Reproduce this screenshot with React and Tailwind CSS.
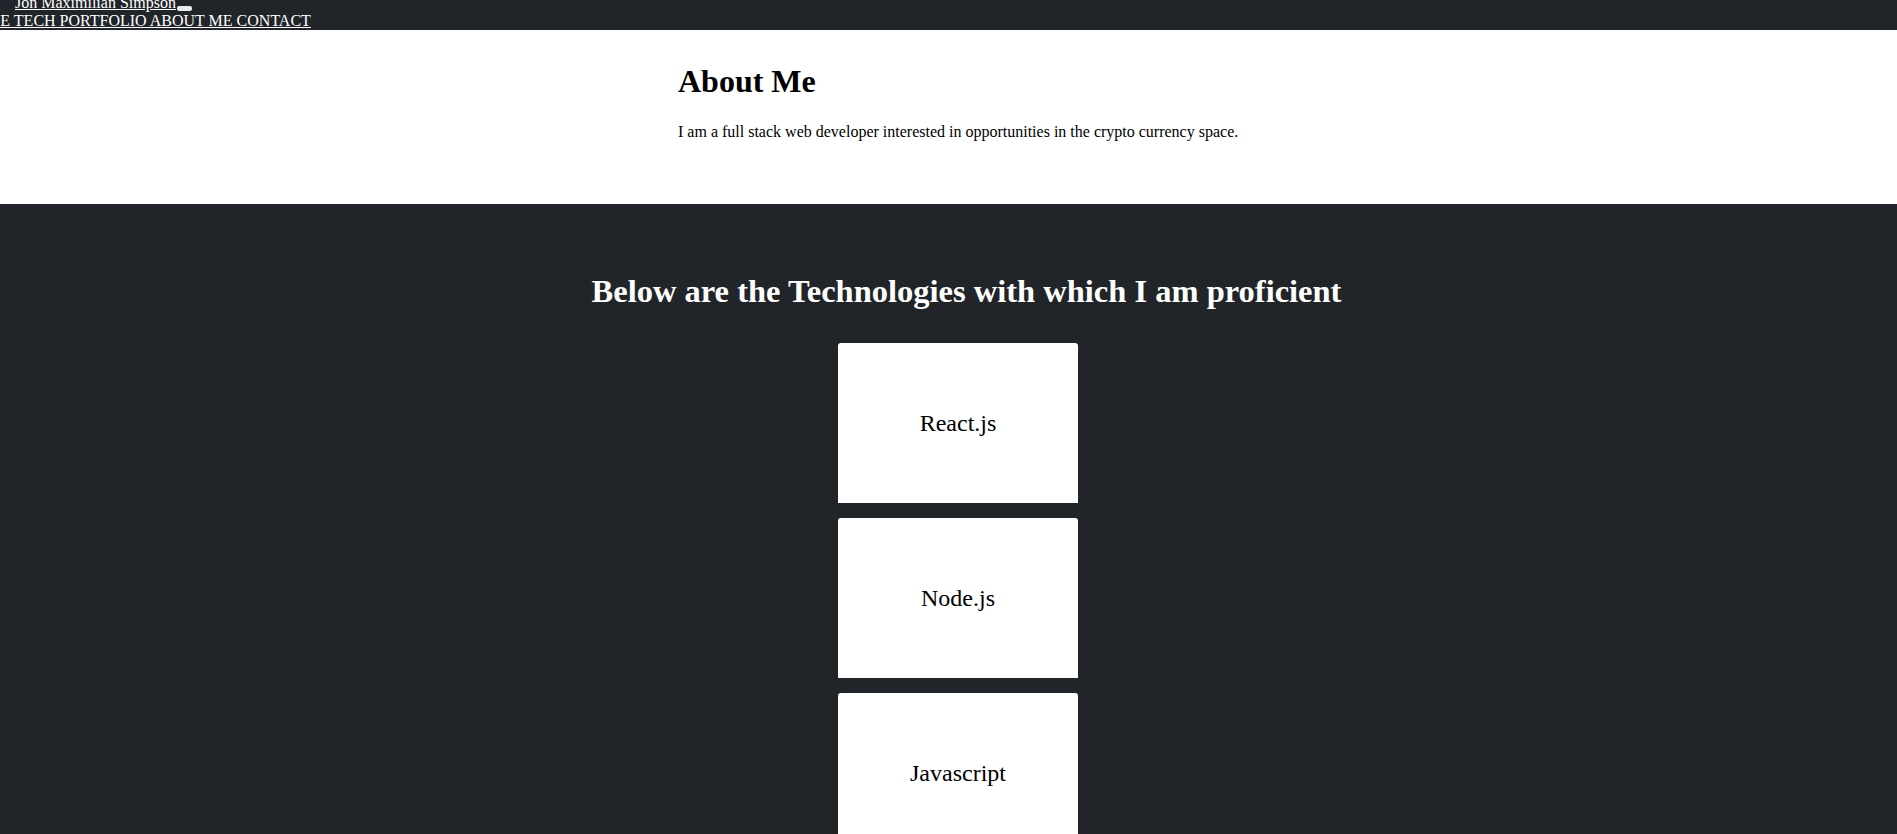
import React from "react";

const serif = { fontFamily: '"Liberation Serif", "Times New Roman", serif' };

function Card({ label }) {
  return (
    <div className="w-[240px] h-[160px] bg-white rounded-t-[3px] flex items-center justify-center">
      <span className="text-[24px] leading-[normal] text-black">{label}</span>
    </div>
  );
}

export default function App() {
  return (
    <div style={serif} className="min-h-[834px] bg-[#212529]">
      <nav className="h-[30px] bg-[#212529] overflow-hidden text-white text-[16px] leading-[normal]">
        <div className="mt-[-6px]">
          <div className="pl-[15px] whitespace-nowrap">
            <a href="#" className="underline">Jon Maximilian Simpson</a>
            <span className="inline-block w-[15px] h-[5px] ml-[1px] bg-[#e9e9ed] rounded-[2px] align-[-3px]"></span>
          </div>
          <div className="ml-[-37px] whitespace-nowrap underline">
            <a href="#">HOME </a>
            <a href="#">TECH PORTFOLIO </a>
            <a href="#">ABOUT ME </a>
            <a href="#">CONTACT</a>
          </div>
        </div>
      </nav>

      <section className="bg-white text-black pt-[33px] pb-[63px]">
        <div className="w-[541px] mx-auto">
          <h1 className="text-[32px] font-bold leading-[normal] mb-[23px] whitespace-nowrap">About Me</h1>
          <p className="text-[16px] leading-[normal] whitespace-nowrap">
            I am a full stack web developer interested in opportunities in the crypto currency space.
          </p>
        </div>
      </section>

      <section className="bg-[#212529] pt-[69px] pb-[40px]">
        <h2 className="text-white text-[32.5px] font-bold leading-[normal] text-center pl-[36px] mb-[33px] whitespace-nowrap">
          Below are the Technologies with which I am proficient
        </h2>
        <div className="flex flex-col items-center gap-[15px] pl-[19px]">
          <Card label="React.js" />
          <Card label="Node.js" />
          <Card label="Javascript" />
        </div>
      </section>
    </div>
  );
}
